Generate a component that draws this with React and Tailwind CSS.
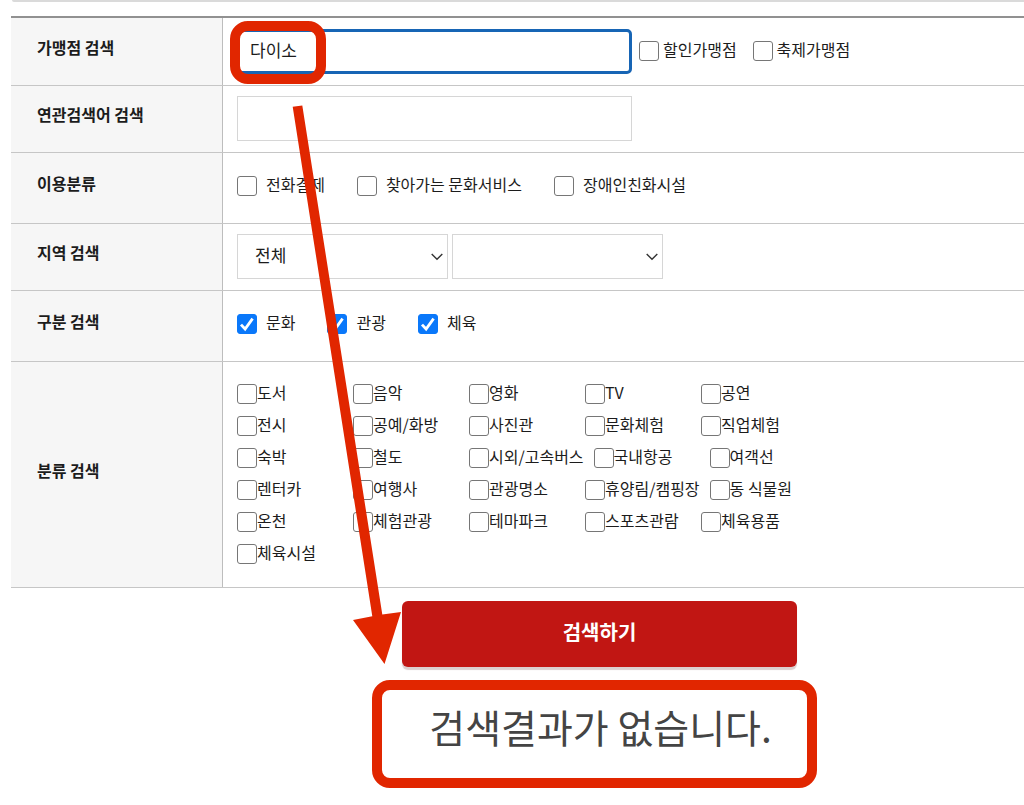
import { useId } from "react";

const usageTypes = ["전화결제", "찾아가는 문화서비스", "장애인친화시설"];
const divisions = ["문화", "관광", "체육"];
const categories = [
  "도서", "음악", "영화", "TV", "공연",
  "전시", "공예/화방", "사진관", "문화체험", "직업체험",
  "숙박", "철도", "시외/고속버스", "국내항공", "여객선",
  "렌터카", "여행사", "관광명소", "휴양림/캠핑장", "동 식물원",
  "온천", "체험관광", "테마파크", "스포츠관람", "체육용품",
  "체육시설",
];

function Check({ label, checked = false, className = "" }) {
  return (
    <label className={`flex items-center whitespace-nowrap ${className}`}>
      <span className="grid size-5 shrink-0 place-items-center">
        <input
          type="checkbox"
          defaultChecked={checked}
          className="peer col-start-1 row-start-1 size-5 appearance-none rounded-[3px] border border-[#767676] bg-white checked:border-[#0a78fa] checked:bg-[#0a78fa]"
        />
        <svg
          viewBox="0 0 20 20"
          className="pointer-events-none invisible col-start-1 row-start-1 size-5 peer-checked:visible"
          fill="none"
          stroke="#fff"
          strokeWidth="2.8"
        >
          <path d="M4 10.6 L8.1 15 L15.6 4.6" />
        </svg>
      </span>
      <span className="pb-1 leading-5">{label}</span>
    </label>
  );
}

function Row({ title, htmlFor, className, children }) {
  const id = useId();
  return (
    <div
      role="group"
      aria-labelledby={id}
      className={`flex border-b border-[#c6c6c6] ${className}`}
    >
      <div className="flex w-[212px] shrink-0 items-center border-r border-[#bdbdbd] bg-[#f6f6f6] pb-[10px] pl-[26px] font-bold">
        <label id={id} htmlFor={htmlFor}>{title}</label>
      </div>
      <div className="flex min-w-0 grow items-center pb-px pl-[14px]">{children}</div>
    </div>
  );
}

function Select({ id, label, options }) {
  return (
    <span className="relative block w-[211px]">
      <select
        id={id}
        aria-label={label}
        className="h-[45px] w-full appearance-none border border-[#d6d6d6] bg-white pb-1 pl-[17px] text-[17px]"
      >
        {options.map((o) => (
          <option key={o}>{o}</option>
        ))}
      </select>
      <svg
        viewBox="0 0 12 8"
        className="pointer-events-none absolute top-[19px] right-[5px] h-2 w-3"
        fill="none"
        stroke="#333"
        strokeWidth="1.4"
      >
        <path d="M0.7 1 L6 6.3 L11.3 1" />
      </svg>
    </span>
  );
}

export default function App() {
  return (
    <main className="relative overflow-hidden bg-white pb-4 font-['Noto_Sans_CJK_KR',sans-serif] text-base text-[#1c1c1c]">
      <div className="ml-3 h-[2px] rounded-bl-full border-b-2 border-[#dadada]" />
      <form className="mt-[14px]" onSubmit={(e) => e.preventDefault()}>
        <div className="ml-[11px] border-t-2 border-[#919191]">
          <Row title="가맹점 검색" htmlFor="store" className="h-[68px]">
            <div className="relative">
              <input
                id="store"
                type="text"
                defaultValue="다이소"
                className="block h-[45px] w-[395px] rounded-[5px] border-3 border-[#1765b5] bg-white pb-1 pl-[10px] text-[17px] outline-none"
              />
              <span className="pointer-events-none absolute -top-2 -left-[7px] h-[63px] w-[96px] rounded-[18px] border-10 border-[#e12600]" />
            </div>
            <div className="flex gap-4 pl-[7px]">
              <Check label="할인가맹점" className="gap-1" />
              <Check label="축제가맹점" className="gap-1" />
            </div>
          </Row>
          <Row title="연관검색어 검색" htmlFor="related" className="h-[67px]">
            <input
              id="related"
              type="text"
              className="block h-[45px] w-[395px] border border-[#d6d6d6] bg-white px-3 text-[17px]"
            />
          </Row>
          <Row title="이용분류" className="h-[71px]">
            <div className="flex gap-8 pb-[3px]">
              {usageTypes.map((t) => (
                <Check key={t} label={t} className="gap-[9px]" />
              ))}
            </div>
          </Row>
          <Row title="지역 검색" htmlFor="region" className="h-[67px]">
            <div className="flex gap-1">
              <Select id="region" label="지역 검색" options={["전체"]} />
              <Select id="district" label="세부 지역" options={[""]} />
            </div>
          </Row>
          <Row title="구분 검색" className="h-[71px]">
            <div className="flex gap-8 pb-[3px]">
              {divisions.map((t) => (
                <Check key={t} label={t} checked className="gap-[9px]" />
              ))}
            </div>
          </Row>
          <Row title="분류 검색">
            <div className="flex max-w-[600px] flex-wrap gap-x-[10px] pt-4 pb-4">
              {categories.map((t) => (
                <Check key={t} label={t} className="h-8 min-w-[106px]" />
              ))}
            </div>
          </Row>
        </div>
        <div className="pt-[13px] pl-[402px]">
          <button
            type="submit"
            className="block h-[66px] w-[395px] rounded-[6px] bg-[#c11613] pb-1 text-xl font-bold text-white shadow-[0_3px_1px_#dccfcf]"
          >
            검색하기
          </button>
        </div>
      </form>
      <div className="mt-[13px] ml-[372px] flex h-[108px] w-[445px] items-center justify-center rounded-[18px] border-10 border-[#e12600] pb-4 pl-3">
        <p className="text-[39px] leading-none whitespace-nowrap text-[#444]">
          검색결과가 없습니다.
        </p>
      </div>
      <svg
        viewBox="0 0 112 562"
        className="pointer-events-none absolute top-[104px] left-[291px] h-[562px] w-[112px]"
        fill="#e12600"
      >
        <path d="M1.7 2.7 L11.3 1.5 L91.3 510.5 L110 508 L93.5 560 L62 516 L81.3 512.3 Z" />
      </svg>
    </main>
  );
}
